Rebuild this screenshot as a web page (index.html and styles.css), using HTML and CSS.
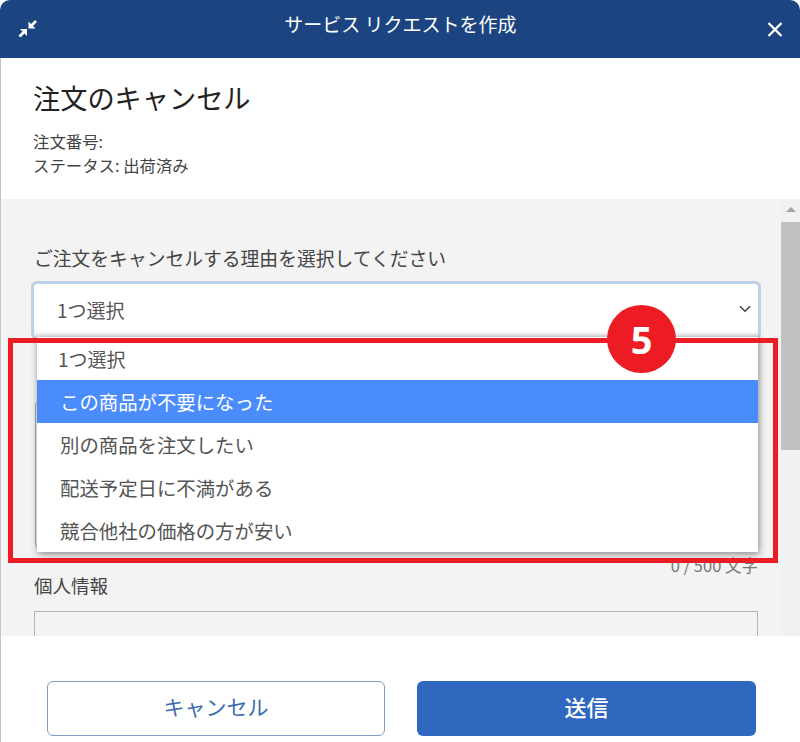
FILE: index.html
```html
<!DOCTYPE html>
<html lang="ja">
  <head>
    <meta charset="UTF-8" />
    <meta name="viewport" content="width=device-width, initial-scale=1.0" />
    <title>サービス リクエストを作成</title>
    <link rel="stylesheet" href="styles.css">
  </head>
  <body>
    <div class="modal">
      <header class="modal-header">
        <svg class="icon-compress" width="20" height="20" viewBox="0 0 20 20">
          <path d="M10.500 2.500v7h7z" fill="#fff" />
          <path d="M13 7l5-5" stroke="#fff" stroke-width="2.600" />
          <path d="M9 17v-7h-7z" fill="#fff" />
          <path d="M6.500 12.500l-5 5" stroke="#fff" stroke-width="2.600" />
        </svg>
        <h2 class="modal-title">サービス リクエストを作成</h2>
        <svg class="icon-close" width="16" height="15" viewBox="0 0 16 15">
          <path d="M1.500 1l13 13M14.500 1l-13 13" stroke="#fff" stroke-width="2.300" />
        </svg>
      </header>

      <section class="intro">
        <h1>注文のキャンセル</h1>
        <p>注文番号:</p>
        <p>ステータス: 出荷済み</p>
      </section>

      <section class="modal-body">
        <div class="form-area">
          <label class="field-label">ご注文をキャンセルする理由を選択してください</label>
          <div class="select-wrap">
            <div class="select-box">
              <span>1つ選択</span>
              <svg width="12" height="8" viewBox="0 0 12 8">
                <path d="M1 1.200l5 5 5-5" fill="none" stroke="#444" stroke-width="1.600" />
              </svg>
            </div>
            <ul class="select-menu">
              <li class="first">1つ選択</li>
              <li class="active">この商品が不要になった</li>
              <li>別の商品を注文したい</li>
              <li>配送予定日に不満がある</li>
              <li>競合他社の価格の方が安い</li>
            </ul>
          </div>
          <div class="textarea"></div>
          <div class="counter">0 / 500 文字</div>
          <label class="field-label personal-label">個人情報</label>
          <div class="personal-box"></div>
        </div>
        <div class="scrollbar">
          <div class="scroll-arrow"></div>
          <div class="scroll-thumb"></div>
        </div>
        <div class="callout">
          <div class="callout-badge">5</div>
        </div>
      </section>

      <footer class="modal-footer">
        <button class="btn btn-cancel">キャンセル</button>
        <button class="btn btn-send">送信</button>
      </footer>
    </div>
  </body>
</html>
```

FILE: styles.css
```css
* {
  box-sizing: border-box;
}

body {
  margin: 0;
  background-color: white;
  font-family: "Noto Sans CJK JP", "Noto Sans", sans-serif;
}

.modal {
  width: 800px;
  height: 742px;
  display: flex;
  flex-direction: column;
  overflow: hidden;
}

.modal-header {
  height: 58px;
  flex: none;
  display: flex;
  align-items: center;
  justify-content: space-between;
  padding: 0 17px 0 18px;
  background-color: #1c4480;
  border-radius: 10px 10px 0 0;
}

.modal-title {
  margin: 0 4px 10px 0;
  color: white;
  font-size: 19px;
  font-weight: 400;
  line-height: 26px;
}

.intro {
  height: 141px;
  flex: none;
  padding: 19px 33px 0;
  box-shadow: inset 1px 0 #c4c4c4;
}

.intro h1 {
  margin: 0 0 12px;
  color: #222;
  font-size: 27.200px;
  font-weight: 400;
  line-height: 40px;
}

.intro p {
  margin: 0;
  color: #444;
  font-size: 16.400px;
  line-height: 24px;
}

.modal-body {
  position: relative;
  flex: 1;
  display: flex;
  overflow: hidden;
  background-color: #f3f3f3;
  box-shadow: inset 1px 0 #c4c4c4;
}

.form-area {
  flex: 1;
  padding: 46px 23px 0 34px;
}

.field-label {
  display: block;
  color: #444;
  font-size: 18.800px;
  line-height: 26px;
}

.select-wrap {
  position: relative;
  margin-top: 13px;
}

.select-box {
  height: 53px;
  display: flex;
  align-items: center;
  justify-content: space-between;
  padding: 0 7px 3px 23px;
  background-color: white;
  color: #555;
  font-size: 19px;
  box-shadow: 0 0 0 3px #bcd0e6, inset 0 -6px 6px -6px rgba(0, 0, 0, 0.25);
  border-radius: 3px;
}

.select-menu {
  position: absolute;
  top: 100%;
  left: 3px;
  right: 0;
  margin: 0;
  padding: 0;
  list-style: none;
  background-color: white;
  box-shadow: 1px 2px 7px rgba(0, 0, 0, 0.45);
}

.select-menu li {
  height: 43px;
  padding-left: 23px;
  color: #555;
  font-size: 19.400px;
  line-height: 43px;
}

.select-menu li.first {
  padding-left: 21px;
  font-size: 19px;
}

.select-menu li.active {
  background-color: #4a8cfb;
  color: white;
}

.textarea {
  height: 147px;
  margin: 64px 0 0 1px;
  border: 1px solid #aaa;
  border-radius: 4px;
}

.counter {
  margin-top: 9px;
  color: #777;
  font-size: 16.500px;
  line-height: 17px;
  text-align: right;
}

.personal-label {
  margin-top: -2px;
  font-size: 18.500px;
}

.personal-box {
  height: 80px;
  margin-top: 13px;
  border: 1px solid #b5b5b5;
}

.scrollbar {
  width: 19px;
  flex: none;
  background-color: #f1f1f1;
}

.scroll-arrow {
  width: 0;
  height: 0;
  margin: 8px auto 10px;
  border-left: 5px solid transparent;
  border-right: 5px solid transparent;
  border-bottom: 5px solid #a3a3a3;
}

.scroll-thumb {
  height: 228px;
  background-color: #c1c1c1;
}

.callout {
  position: absolute;
  top: 139px;
  left: 8px;
  width: 770px;
  height: 225px;
  border: 5px solid #ed1c24;
}

.callout-badge {
  position: absolute;
  top: -38px;
  left: 594px;
  width: 69px;
  height: 68px;
  border-radius: 50%;
  background-color: #ed1c24;
  color: white;
  font-family: "Noto Sans", sans-serif;
  font-size: 38px;
  font-weight: 700;
  line-height: 68px;
  text-align: center;
}

.modal-footer {
  height: 106px;
  flex: none;
  display: flex;
  gap: 32px;
  padding: 45px 44px 0 47px;
  box-shadow: inset 1px 0 #c4c4c4;
}

.btn {
  height: 55px;
  padding: 0 0 5px;
  border-radius: 6px;
  font-family: inherit;
  font-size: 21px;
}

.btn-cancel {
  width: 338px;
  border: 1px solid #7c9cc2;
  background-color: white;
  color: #3a6db0;
}

.btn-send {
  width: 339px;
  border: none;
  background-color: #2f69bf;
  color: white;
  font-size: 22px;
  font-weight: 500;
}
```
